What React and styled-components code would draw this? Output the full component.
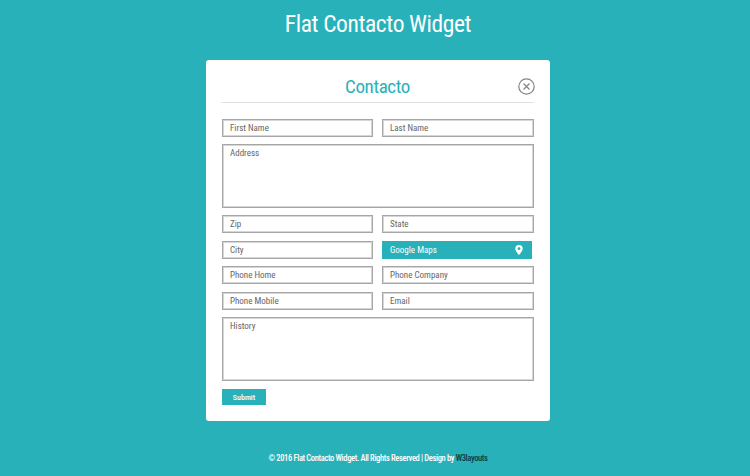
import styled, { createGlobalStyle } from 'styled-components';

const TEAL = '#29b1b9';

const GlobalStyle = createGlobalStyle`
  html, body {
    margin: 0;
    padding: 0;
    background: ${TEAL};
  }
  body {
    font-family: 'Roboto', 'Open Sans', sans-serif;
    font-stretch: 75%;
  }
`;

const Page = styled.div`
  width: 750px;
  height: 476px;
  overflow: hidden;
  display: flex;
  flex-direction: column;
  align-items: center;
  background: ${TEAL};
`;

const Title = styled.h1`
  margin: 0 0 0 6px;
  height: 60px;
  padding-top: 9px;
  box-sizing: border-box;
  color: #fff;
  font-size: 23.5px;
  line-height: 30px;
  font-weight: 400;
  letter-spacing: -0.4px;
`;

const Card = styled.div`
  width: 344px;
  height: 361px;
  box-sizing: border-box;
  margin-left: 6px;
  padding: 0 16px 0 15px;
  background: #fff;
  border-radius: 3px;
`;

const Header = styled.div`
  position: relative;
  height: 42px;
  display: flex;
  align-items: center;
  justify-content: center;
  border-bottom: 1px solid #e2e2e2;
  margin-bottom: 16px;
`;

const Heading = styled.h2`
  margin: 11px 0 0;
  color: ${TEAL};
  font-size: 19px;
  line-height: 28px;
  font-weight: 400;
  letter-spacing: -0.4px;
`;

const Close = styled.button`
  position: absolute;
  right: -1px;
  top: 18px;
  width: 17px;
  height: 17px;
  padding: 0;
  border: 0;
  background: none;
  display: flex;

  svg {
    width: 17px;
    height: 17px;
  }
`;

const Form = styled.form`
  margin: 0;
  padding-left: 1px;
  display: grid;
  grid-template-columns: 151px 152px;
  column-gap: 9px;
`;

const Input = styled.input`
  box-sizing: border-box;
  width: 100%;
  height: 18px;
  margin-bottom: ${(p) => p.$gap || 8}px;
  padding: 0 7px 1px;
  border: 1px solid #a6a6a6;
  box-shadow: inset 0 0 0 1px #d6d6d6;
  border-radius: 0;
  background: #fff;
  font-family: inherit;
  font-stretch: inherit;
  font-size: 9px;
  color: #666;
  outline: none;

  &::placeholder {
    color: #666;
    opacity: 1;
  }
`;

const Area = styled.textarea`
  grid-column: 1 / -1;
  display: block;
  box-sizing: border-box;
  width: 312px;
  height: 64px;
  margin: 0 0 ${(p) => p.$gap}px;
  padding: 3px 7px;
  border: 1px solid #a6a6a6;
  box-shadow: inset 0 0 0 1px #d6d6d6;
  border-radius: 0;
  background: #fff;
  font-family: inherit;
  font-stretch: inherit;
  font-size: 9px;
  color: #666;
  outline: none;
  resize: none;

  &::placeholder {
    color: #666;
    opacity: 1;
  }
`;

const MapsButton = styled.div`
  box-sizing: border-box;
  width: 150px;
  height: 18px;
  margin-bottom: 7px;
  padding: 0 9px 1px 8px;
  display: flex;
  align-items: center;
  justify-content: space-between;
  background: ${TEAL};
  color: #fff;
  font-size: 9px;

  svg {
    width: 8px;
    height: 10px;
  }
`;

const Submit = styled.button`
  grid-column: 1 / -1;
  width: 44px;
  height: 16px;
  padding: 0;
  border: 0;
  background: ${TEAL};
  color: #fff;
  font-family: inherit;
  font-stretch: inherit;
  font-size: 8px;
  font-weight: 500;
`;

const Footer = styled.p`
  margin: 31px 0 0 6px;
  color: #fff;
  font-size: 8.5px;
  line-height: 12px;
  font-weight: 500;
  letter-spacing: -0.36px;

  a {
    color: #0d3b40;
    text-decoration: none;
  }
`;

export default function App() {
  return (
    <Page>
      <GlobalStyle />
      <Title>Flat Contacto Widget</Title>
      <Card>
        <Header>
          <Heading>Contacto</Heading>
          <Close type="button" aria-label="Close">
            <svg viewBox="0 0 17 17" fill="none" stroke="#858585" strokeWidth="1.2">
              <circle cx="8.5" cy="8.5" r="7.7" />
              <path d="M5.5 5.5l6 6M11.5 5.5l-6 6" />
            </svg>
          </Close>
        </Header>
        <Form>
          <Input placeholder="First Name" $gap={7} />
          <Input placeholder="Last Name" $gap={7} />
          <Area placeholder="Address" $gap={7} />
          <Input placeholder="Zip" />
          <Input placeholder="State" />
          <Input placeholder="City" $gap={7} />
          <MapsButton>
            Google Maps
            <svg viewBox="0 0 8 10">
              <path
                fillRule="evenodd"
                fill="#fff"
                d="M4 0a3.7 3.7 0 0 1 3.7 3.7C7.7 6 4 10 4 10S.3 6 .3 3.7A3.7 3.7 0 0 1 4 0zm0 2.3a1.4 1.4 0 1 0 0 2.8 1.4 1.4 0 0 0 0-2.8z"
              />
            </svg>
          </MapsButton>
          <Input placeholder="Phone Home" />
          <Input placeholder="Phone Company" />
          <Input placeholder="Phone Mobile" $gap={7} />
          <Input placeholder="Email" $gap={7} />
          <Area placeholder="History" $gap={8} />
          <Submit type="button">Submit</Submit>
        </Form>
      </Card>
      <Footer>
        © 2016 Flat Contacto Widget. All Rights Reserved | Design by <a href="#w3">W3layouts</a>
      </Footer>
    </Page>
  );
}
